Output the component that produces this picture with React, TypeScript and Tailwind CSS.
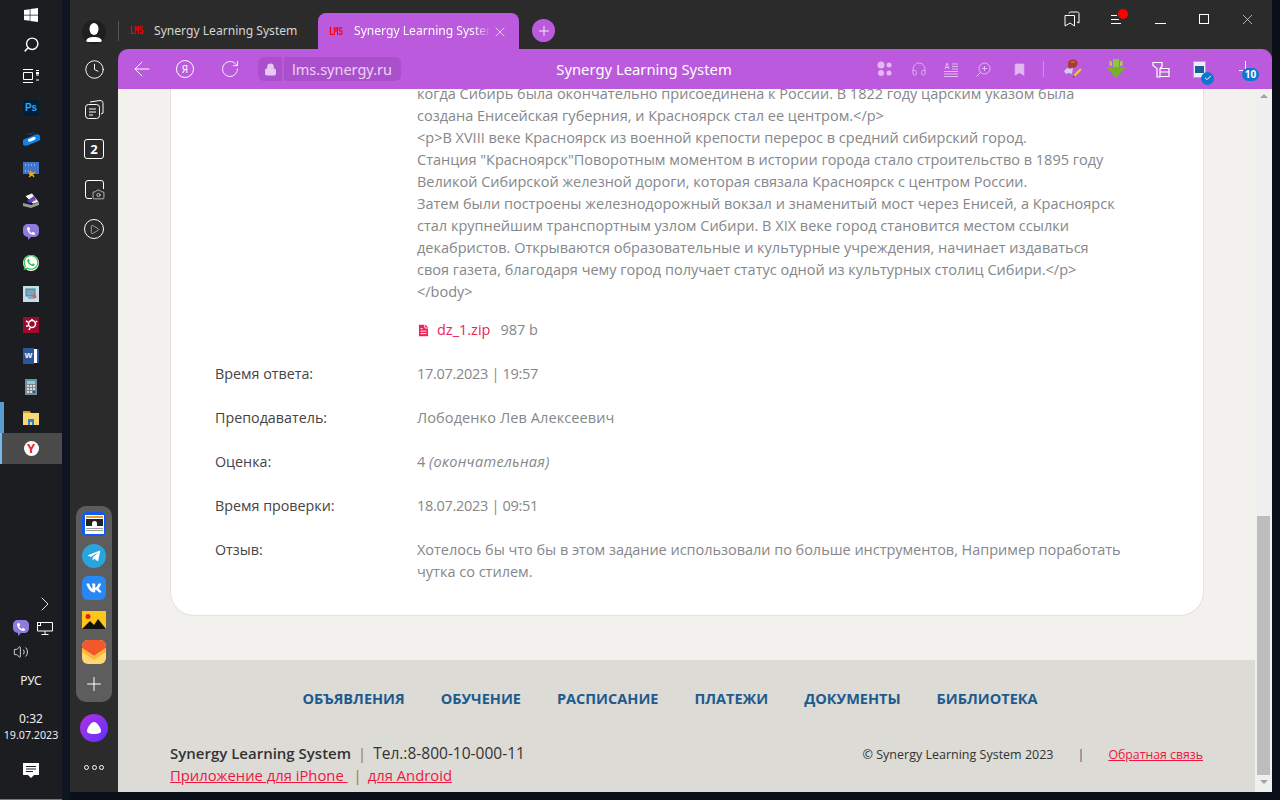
import { ArrowLeft, Bookmark, Headphones, Lock, Play, Plus, RotateCw, Search, X, Check, ChevronRight, Clock, FileText, Volume2, Camera } from "lucide-react";
import { FaPhoneAlt, FaWhatsapp, FaTelegramPlane, FaVk, FaWindows } from "react-icons/fa";
import type { ReactNode } from "react";

const bodyLines = [
  "когда Сибирь была окончательно присоединена к России. В 1822 году царским указом была",
  "создана Енисейская губерния, и Красноярск стал ее центром.</p>",
  "<p>В XVIII веке Красноярск из военной крепости перерос в средний сибирский город.",
  'Станция "Красноярск"Поворотным моментом в истории города стало строительство в 1895 году',
  "Великой Сибирской железной дороги, которая связала Красноярск с центром России.",
  "Затем были построены железнодорожный вокзал и знаменитый мост через Енисей, а Красноярск",
  "стал крупнейшим транспортным узлом Сибири. В XIX веке город становится местом ссылки",
  "декабристов. Открываются образовательные и культурные учреждения, начинает издаваться",
  "своя газета, благодаря чему город получает статус одной из культурных столиц Сибири.</p>",
  "</body>",
];

const navItems = ["Объявления", "Обучение", "Расписание", "Платежи", "Документы", "Библиотека"];

const Row = ({ label, children }: { label: string; children: ReactNode }) => (
  <div className="flex mt-[22px] leading-[22px]">
    <div className="w-[202px] shrink-0 text-[#444444] text-[14.300px]">{label}</div>
    <div className="text-[#85878a]">{children}</div>
  </div>
);

const Favicon = () => (
  <span className="w-[16px] text-[8px] leading-none text-[#ff0000] font-['DejaVu_Sans_Mono',monospace] font-bold scale-y-125 tracking-[-0.2px] shrink-0">LMS</span>
);

const ViberIcon = ({ size }: { size: number }) => (
  <div className="relative flex items-center justify-center text-white" style={{ width: size, height: size }}>
    <svg width={size} height={size} viewBox="0 0 16 16" className="absolute inset-0">
      <path d="M5 0h6c3 0 5 2 5 5v3c0 3-2 5-5 5H8l-3 3v-3c-3-.5-5-2-5-5V5c0-3 2-5 5-5z" fill="#8f7be0" />
    </svg>
    <FaPhoneAlt className="relative text-[8px] -mt-[2px]" />
  </div>
);

const taskbarIcons: ReactNode[] = [
  <FaWindows key="win" className="text-white text-[16px]" />,
  <Search key="search" size={17} className="text-white -scale-x-100" />,
  <svg key="tv" width="16" height="16" viewBox="0 0 16 16" fill="none" stroke="white"><path d="M0 1.500h10M0 14.500h10M.5 4.500h9v7h-9zM13 2.500h3M13 7h3M13 12h3" /><rect x="13" y="4" width="3" height="2" fill="white" stroke="none" /></svg>,
  <div key="ps" className="w-[16px] h-[16px] rounded-[2px] bg-[#001e36] text-[#31a8ff] text-[10px] font-bold leading-[16px] text-center font-['Liberation_Sans',sans-serif]">Ps</div>,
  <svg key="pill" width="17" height="14" viewBox="0 0 17 14"><path d="M3 3C6 0 12 0 13 1L8 3z" fill="#20334f" /><rect x="-1" y="4.500" width="19" height="7" rx="3.500" transform="rotate(-22 8.500 8)" fill="#0f82ea" /><rect x="5" y="6" width="8" height="3" rx="1.500" transform="rotate(-22 8.500 8)" fill="#ffffff" /></svg>,
  <svg key="snip" width="16" height="16" viewBox="0 0 16 16"><rect y="0" width="16" height="12" fill="#3f74c9" /><path d="M2 3h12M2 9h5" stroke="#cfe0f8" strokeDasharray="1 2" /><circle cx="8" cy="12" r="2" fill="#e9a91b" /><path d="M6 15l6-5M7 9l4 6" stroke="#e9a91b" strokeWidth="1.400" /></svg>,
  <svg key="scan" width="17" height="15" viewBox="0 0 17 15"><path d="M2 3L9 0l7 9-6 2z" fill="#f2f2f2" stroke="#000" strokeWidth=".6" /><path d="M4 8l7-5 2 4-6 3z" fill="#3b49d6" /><path d="M7 8l4-3 1 2-3 2z" fill="#d6317f" /><path d="M0 10l8 2 8-3v3l-8 3-8-2z" fill="#9a9a9a" /></svg>,
  <ViberIcon key="viber" size={16} />,
  <div key="wa" className="w-[16px] h-[16px] rounded-full bg-white flex items-center justify-center"><FaWhatsapp className="text-[#2fc653] text-[17px]" /></div>,
  <svg key="rdp" width="16" height="16" viewBox="0 0 16 16"><rect width="16" height="16" fill="#c5dfea" /><rect x="3" y="3" width="9" height="7" fill="#7aa7bd" stroke="#4c7c92" /><path d="M5 12h6" stroke="#4c7c92" /><circle cx="11.500" cy="10.500" r="2" fill="#e85c5c" /></svg>,
  <div key="gear" className="w-[16px] h-[16px] bg-[#9c0a2e] flex items-center justify-center"><svg width="13" height="13" viewBox="0 0 13 13" fill="none" stroke="white" strokeWidth="1.600"><circle cx="7" cy="6" r="3.500" /><path d="M1 3l2 1M1 8h2M4 12l1-2M7 1v1M12 3l-1 1" /></svg></div>,
  <div key="word" className="w-[16px] h-[16px] relative"><div className="absolute right-0 top-[1px] w-[12px] h-[14px] bg-white border-r-[2px] border-[#2b579a]" /><div className="absolute left-0 top-0 w-[11px] h-[16px] bg-[#2b579a] text-white text-[8px] font-bold leading-[16px] text-center font-['Liberation_Sans',sans-serif]">W</div></div>,
  <div key="calc" className="w-[12px] h-[16px] bg-[#7b8a93] flex flex-col items-center pt-[2px] gap-[1px]"><div className="w-[8px] h-[3px] bg-[#6fd6e8]" /><div className="w-[8px] h-[8px] grid grid-cols-3 gap-[1px]">{Array.from({ length: 9 }).map((_, i) => <div key={i} className={i === 8 ? "bg-[#1f4f8f]" : "bg-[#d7dde0]"} />)}</div></div>,
  <svg key="folder" width="16" height="14" viewBox="0 0 16 14"><path d="M0 0h6l2 2h8v12H0z" fill="#f8d775" /><path d="M0 0h6l2 2H0z" fill="#dd9e1c" /><path d="M5 14V8h6v6H9v-3H7v3z" fill="#2f80d0" /></svg>,
];

const dockColors = "w-[24px] h-[24px] flex items-center justify-center";

export default function App() {
  return (
    <div className="flex w-[1280px] h-[800px] overflow-hidden bg-[#0a0f18] font-['Noto_Sans',sans-serif]">
      {/* Windows taskbar */}
      <aside className="w-[62px] h-full shrink-0 bg-[#1c1d20] flex flex-col border-b-[1px] border-[#777777]">
        {taskbarIcons.map((icon, i) => (
          <div key={i} className={`flex items-center justify-center shrink-0 ${i === 0 ? "h-[30px]" : "h-[31px]"} ${i === 1 || i === 2 ? "-translate-y-[1px]" : ""} ${i === 13 ? "border-l-[4px] border-[#5a9bd0] pr-[4px]" : ""}`}>{icon}</div>
        ))}
        <div className="h-[31px] bg-[#4b4b4b] border-l-[2px] border-[#76b9ed] flex items-center justify-center pr-[2px] shrink-0">
          <div className="w-[15px] h-[15px] rounded-full bg-white flex items-center justify-center text-[#e0282e] text-[13px] font-bold leading-none">Y</div>
        </div>
        <div className="mt-auto flex flex-col text-white">
          <div className="flex justify-end pr-[5px]"><ChevronRight size={24} strokeWidth={0.9} /></div>
          <div className="flex items-center justify-between pl-[13px] pr-[9px] mt-[4px]">
            <ViberIcon size={16} />
            <svg width="16" height="13" viewBox="0 0 16 13" fill="none" stroke="white"><path d="M3 .5h12.500v8.500H.5V3M8 9v3M4.500 12.500h7" /><rect x=".5" y=".5" width="3" height="3" /></svg>
          </div>
          <div className="pl-[13px] mt-[8px]"><Volume2 size={16} strokeWidth={1.200} /></div>
          <div className="text-center text-[12px] leading-[16px] mt-[13px] text-[#eeeeee]">РУС</div>
          <div className="text-center text-[12px] leading-[17px] mt-[21px] text-[#eeeeee]">0:32</div>
          <div className="text-center text-[10.700px] leading-[17px] text-[#eeeeee] whitespace-nowrap">19.07.2023</div>
          <div className="flex justify-center mt-[19px] mb-[20px]">
            <svg width="16" height="16" viewBox="0 0 16 16"><path d="M0 0h16v12h-5l-3 3-3-3H0z" fill="white" /><path d="M3 3.500h10M3 6h10M3 8.500h7" stroke="#1c1d20" /></svg>
          </div>
        </div>
      </aside>

      {/* sliver of desktop wallpaper */}
      <div className="w-[8px] h-full shrink-0 bg-[#0e1520]" />

      {/* Yandex Browser window */}
      <div className="w-[1202px] h-[792px] shrink-0 flex bg-[#2b2b2b]">
        {/* side rail */}
        <div className="w-[48px] shrink-0 flex flex-col items-center text-white">
          <div className="w-[24px] h-[24px] mt-[20px] rounded-full bg-[#1f1f1f] flex items-center justify-center overflow-hidden">
            <svg width="18" height="20" viewBox="0 0 18 20" fill="white"><ellipse cx="9" cy="7" rx="4.500" ry="6" /><path d="M1 20c0-4 4-5 8-5s8 1 8 5z" /></svg>
          </div>
          <Clock size={21} strokeWidth={1.100} className="mt-[15px]" />
          <svg width="19" height="19" viewBox="0 0 19 19" fill="none" stroke="white" className="mt-[20px]"><rect x=".5" y="4.500" width="14" height="14" rx="3" /><path d="M4 9h7M4 12h7M4 15h4M5 2l10-1.500c2 0 3 1 3 3V13l-2 1" /></svg>
          <div className="w-[20px] h-[20px] mt-[20px] border border-white rounded-[3px] text-[13px] font-bold leading-[18px] text-center">2</div>
          <div className="relative w-[19px] h-[19px] mt-[21px]">
            <div className="absolute inset-0 border border-white rounded-[3px]" />
            <div className="absolute right-[-1px] bottom-[-1px] w-[13px] h-[11px] bg-[#2b2b2b] flex items-center justify-center"><Camera size={13} strokeWidth={1.200} /></div>
          </div>
          <div className="w-[20px] h-[20px] mt-[20px] rounded-full border border-white flex items-center justify-center"><Play size={11} strokeWidth={1.200} /></div>
          <div className="mt-auto w-[36px] h-[196px] bg-[#5d5d5d] rounded-[10px] flex flex-col items-center pt-[6px] gap-[8px]">
            <div className={`${dockColors} rounded-[5px] bg-[#0a5cf5] p-[2.500px]`}>
              <div className="w-full h-full bg-white flex flex-col px-[1px] pt-[1px]">
                <div className="h-[2px] bg-[#f59b1b]" />
                <div className="h-[7px] mt-[1px] bg-[#222222] flex items-end justify-center"><div className="w-[5px] h-[5px] rounded-t-full bg-white" /></div>
                <div className="h-px mt-[2px] bg-[#9a9a9a]" />
                <div className="h-px mt-px bg-[#9a9a9a]" />
              </div>
            </div>
            <div className={`${dockColors} rounded-full bg-[#29a4dd]`}><FaTelegramPlane className="text-white text-[14px] -ml-[1px]" /></div>
            <div className={`${dockColors} rounded-[6px] bg-[#2787f5]`}><FaVk className="text-white text-[16px]" /></div>
            <svg width="24" height="18" viewBox="0 0 24 18" className="my-[3px]"><rect width="24" height="18" fill="#ffc61a" /><circle cx="6" cy="5.500" r="2.500" fill="#e32020" /><path d="M0 18l8-8 4 4 4-6 8 10z" fill="#111111" /></svg>
            <div className={`${dockColors} rounded-[6px] bg-[#ffd873] overflow-hidden`}><svg width="24" height="24" viewBox="0 0 24 24"><path d="M0 0h24v8l-12 8L0 8z" fill="#f2582c" /><path d="M0 8l12 8 12-8v4l-12 8-12-8z" fill="#ffb53c" /></svg></div>
            <Plus size={22} strokeWidth={1.100} className="mt-[1px]" />
          </div>
          <div className="w-[28px] h-[28px] mt-[12px] rounded-full bg-gradient-to-br from-[#b02be0] to-[#5f2bff] flex items-center justify-center">
            <svg width="14" height="12" viewBox="0 0 14 12" fill="white"><path d="M7 0c3 0 7 6 7 9 0 2-2 3-7 3s-7-1-7-3c0-3 4-9 7-9z" /></svg>
          </div>
          <div className="flex gap-[2.500px] mt-[23px] mb-[22px]">
            <div className="w-[5px] h-[5px] rounded-full border border-white" />
            <div className="w-[5px] h-[5px] rounded-full border border-white" />
            <div className="w-[5px] h-[5px] rounded-full border border-white" />
          </div>
        </div>

        <div className="flex-1 min-w-0 flex flex-col">
          {/* tab strip */}
          <div className="h-[49px] shrink-0 flex items-end text-[12.100px]">
            <div className="w-[200px] h-[36px] flex items-center relative">
              <div className="w-px h-[20px] bg-[#555555]" />
              <div className="ml-[11px] pt-[1px] flex items-center gap-[8px] text-[#d6d6d6]"><Favicon /><span>Synergy Learning System</span></div>
            </div>
            <div className="w-[201px] h-[36px] rounded-t-[8px] bg-[#bb5add] flex items-center pl-[11px] pr-[11px] pt-[1px] text-white">
              <Favicon />
              <span className="ml-[9px] w-[137px] overflow-hidden whitespace-nowrap [mask-image:linear-gradient(to_right,black_88%,transparent)]">Synergy Learning System</span>
              <X size={16} strokeWidth={1} className="ml-auto" />
            </div>
            <div className="ml-[13px] mb-[7px] w-[23px] h-[23px] rounded-full bg-[#bb5add] flex items-center justify-center text-white"><Plus size={16} strokeWidth={1.300} /></div>
            <div className="ml-auto self-start flex items-center text-white h-[38px]">
              <svg width="16" height="16" viewBox="0 0 16 16" fill="none" stroke="white"><path d="M1 4.500h9.500V15l-4.500-3-5 3zM5 2.500c0-1 .5-1.500 1.500-1.500h7c1 0 1.500.5 1.500 1.500V12l-2-1" /></svg>
              <div className="relative ml-[31px] flex flex-col gap-[3px] w-[10px]">
                <div className="h-px bg-white w-[6px]" /><div className="h-px bg-white w-[8px]" /><div className="h-px bg-white" />
                <div className="absolute left-[7px] top-[-6px] w-[10px] h-[10px] rounded-full bg-[#ff0000]" />
              </div>
              <div className="ml-[34px] w-[11px] h-px bg-white mt-[8px]" />
              <div className="ml-[33px] w-[10px] h-[10px] border border-white" />
              <X size={17} strokeWidth={0.9} className="ml-[30px] mr-[16px]" />
            </div>
          </div>

          {/* toolbar */}
          <div className="h-[40px] shrink-0 bg-[#bb5add] rounded-t-[10px] flex items-center text-white relative">
            <ArrowLeft size={24} strokeWidth={1} className="ml-[12px]" />
            <div className="ml-[22px] w-[18px] h-[18px] rounded-full border border-white text-[10px] leading-[16px] text-center">Я</div>
            <RotateCw size={20} strokeWidth={1} className="ml-[26px]" />
            <div className="ml-[18px] w-[24px] h-[24px] rounded-l-[6px] rounded-r-[2px] bg-[#ab50cc] flex items-center justify-center"><Lock size={13} className="text-[#e9c9f3]" fill="#e9c9f3" /></div>
            <div className="ml-[2px] w-[117px] h-[24px] rounded-r-[6px] rounded-l-[2px] bg-[#ab50cc] pl-[8px] text-[14.500px] leading-[24px] text-[#ecd2f5]">lms.synergy.ru</div>
            <div className="ml-[155px] w-[176px] text-center text-[14.800px] whitespace-nowrap">Synergy Learning System</div>
            <div className="ml-auto flex items-center text-[#e4b8f2]">
              <svg width="16" height="16" viewBox="0 0 16 16" fill="#e4b8f2"><circle cx="4" cy="4" r="3.500" /><circle cx="12" cy="4" r="2.500" /><circle cx="4" cy="12" r="3" /><circle cx="12" cy="12" r="2.500" /></svg>
              <Headphones size={16} strokeWidth={1.300} className="ml-[18px]" />
              <svg width="14" height="15" viewBox="0 0 14 15" stroke="#e4b8f2" className="ml-[17px]"><path d="M0 14.500h14M0 12h14M0 9.500h14M8 7h6M8 4.500h6M8 2h6M1 7l2-6 2 6M1.500 5.500h3" fill="none" /></svg>
              <svg width="15" height="15" viewBox="0 0 15 15" fill="none" stroke="#e4b8f2" className="ml-[18px]"><circle cx="8.500" cy="6.500" r="5.500" /><path d="M4.500 10.500L.5 14.500M8.500 4v5M6 6.500h5" /></svg>
              <Bookmark size={15} fill="#e4b8f2" strokeWidth={1} className="ml-[21px]" />
              <div className="ml-[16px] w-px h-[16px] bg-[#cf8ee8]" />
              <svg width="20" height="20" viewBox="0 0 20 20" className="ml-[19px]"><path d="M5 4c0-2 3-4 6-3.500s4 3 3 5.500-3 3-5 2.500L6 9C5 8 5 6 5 4z" fill="#a83c2c" /><path d="M8 3h4" stroke="#e08070" /><path d="M1 12l3-3 3 1 3-1-1 6-3-1-3 1z" fill="#c9cfe4" /><path d="M11 17l7-7" stroke="#f0c83a" strokeWidth="2.200" /><path d="M10 18l1.500-1" stroke="#222222" /></svg>
              <svg width="20" height="20" viewBox="0 0 20 20" className="ml-[23px]"><path d="M7 0h6v8h7L10 19 0 8h7z" fill="#78b02a" /><path d="M7 0h6v8H7z" fill="#8fc63c" /><path d="M3.500 1l2.500 2v4H3.500zM16.500 1L14 3v4h2.500z" fill="#a5d24a" /></svg>
              <svg width="18" height="17" viewBox="0 0 18 17" fill="none" stroke="white" className="ml-[26px]"><path d="M1 1.500h9v4l-2 2V16H5V7.500l-4-3zM8 7.500h9v8H8M8 11h9" strokeWidth="1.200" /></svg>
              <div className="relative ml-[23px] w-[13px] h-[17px] bg-[#e6eef8] border border-[#9fb0c0]">
                <div className="absolute left-[1px] top-[4px] w-[9px] h-[7px] bg-[#1b5f98]" />
                <div className="absolute left-[7px] top-[10px] w-[13px] h-[13px] rounded-full bg-[#0b78d0] text-white flex items-center justify-center"><Check size={8} strokeWidth={3} /></div>
              </div>
              <div className="relative ml-[33px] mr-[19px] w-[14px] h-[16px]">
                <div className="absolute left-[6px] top-0 w-px h-[10px] bg-white" />
                <div className="absolute left-0 top-[9px] w-[4px] h-px bg-white" />
                <div className="absolute left-[3px] top-[7px] w-[17px] h-[13px] rounded-full bg-[#0b78d0] text-white text-[10px] font-bold leading-[13px] text-center">10</div>
              </div>
            </div>
          </div>

          {/* page + scrollbar */}
          <div className="flex-1 min-h-0 flex">
            <main className="w-[1137px] shrink-0 bg-[#f2f1ee] flex flex-col overflow-hidden font-['Open_Sans',sans-serif] text-[14.500px]">
              <div className="ml-[52px] w-[1034px] h-[527px] shrink-0 bg-white border border-t-0 border-[#e3e2de] rounded-b-[24px] pl-[44px] overflow-hidden">
                <div className="pl-[202px] -mt-[6px] leading-[22px] text-[#85878a] whitespace-nowrap">
                  {bodyLines.map((line) => <div key={line}>{line}</div>)}
                  <div className="flex items-center mt-[16px]">
                    <FileText size={15} fill="#ee2458" stroke="white" strokeWidth={1.500} className="mr-[6px] -ml-[1px]" />
                    <span className="text-[#ee2458]">dz_1.zip</span>
                    <span className="ml-[10px]">987 b</span>
                  </div>
                </div>
                <Row label="Время ответа:"><span className="tracking-[-0.3px]">17.07.2023 | 19:57</span></Row>
                <Row label="Преподаватель:"><span className="tracking-[0.1px]">Лободенко Лев Алексеевич</span></Row>
                <Row label="Оценка:">4 <i className="tracking-[0.3px]">(окончательная)</i></Row>
                <Row label="Время проверки:"><span className="tracking-[-0.3px]">18.07.2023 | 09:51</span></Row>
                <Row label="Отзыв:"><span className="tracking-[-0.03px]">Хотелось бы что бы в этом задание использовали по больше инструментов, Например поработать</span><br />чутка со стилем.</Row>
              </div>

              <footer className="mt-[44px] flex-1 bg-[#dcdbd6] px-[52px] flex flex-col">
                <nav className="flex justify-center gap-[36px] pt-[29px] pr-[33px] text-[14.500px] leading-[20px] font-bold uppercase text-[#1f5a8c] whitespace-nowrap">
                  {navItems.map((item) => <span key={item}>{item}</span>)}
                </nav>
                <div className="flex justify-between mt-[33px] whitespace-nowrap">
                  <div className="leading-[22px] text-[#333333] text-[14.800px]">
                    <div>
                      <span className="font-semibold text-[15px]">Synergy Learning System</span>
                      <span className="mx-[7px] text-[#a5702c]">|</span>
                      <span className="text-[15.500px]">Тел.:8-800-10-000-11</span>
                    </div>
                    <div>
                      <span className="text-[#f0163f] underline">Приложение для iPhone </span>
                      <span className="mx-[6px] text-[#a5702c]">|</span>
                      <span className="text-[#f0163f] underline">для Android</span>
                    </div>
                  </div>
                  <div className="text-[12.500px] leading-[22px] text-[#333333] flex pt-[2px]">
                    <span>© Synergy Learning System 2023</span>
                    <span className="ml-[24px] text-[#1f5a8c]">|</span>
                    <span className="ml-[24px] text-[12.300px] text-[#f0163f] underline">Обратная связь</span>
                  </div>
                </div>
              </footer>
            </main>
            <div className="w-[17px] shrink-0 bg-[#f0f0f0] flex flex-col items-center relative">
              <div className="w-0 h-0 mt-[5px] border-x-[4px] border-x-transparent border-b-[4px] border-b-[#a3a3a3]" />
              <div className="w-[13px] h-[259px] mt-[418px] bg-[#bdbdbd]" />
              <div className="w-0 h-0 mt-[5px] border-x-[4px] border-x-transparent border-t-[4px] border-t-[#a3a3a3]" />
            </div>
          </div>
        </div>
      </div>
    </div>
  );
}
